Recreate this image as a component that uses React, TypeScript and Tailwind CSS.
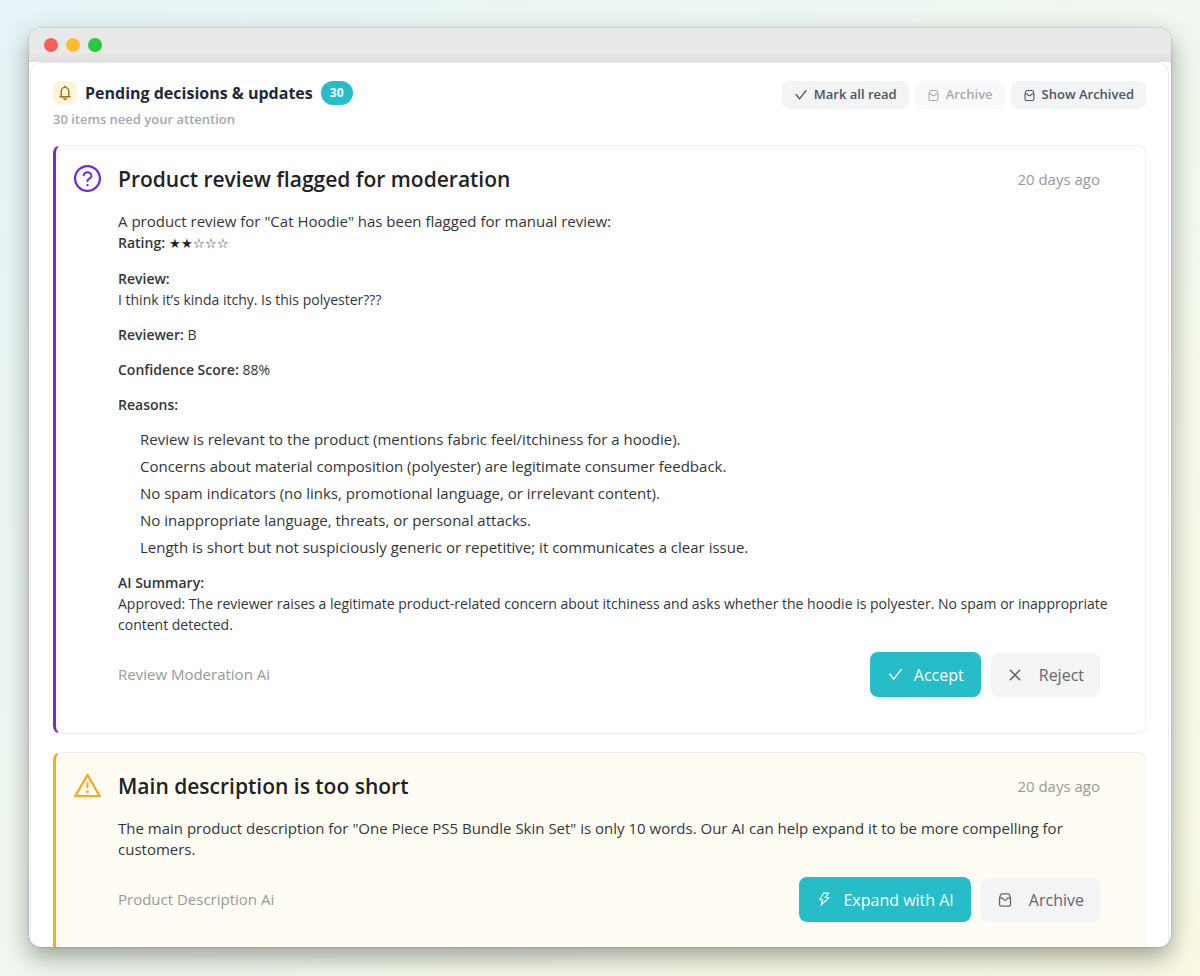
import type { ReactNode } from "react";
import {
  AiOutlineCheck,
  AiOutlineClose,
  AiOutlineQuestionCircle,
  AiOutlineThunderbolt,
  AiOutlineWarning,
} from "react-icons/ai";

function InboxIcon({ className }: { className: string }) {
  return (
    <svg viewBox="0 0 16 16" className={className} fill="none" stroke="currentColor" strokeWidth="1.3" strokeLinejoin="round" strokeLinecap="round" aria-hidden="true">
      <path d="M5.200 1.800h5.600a1.800 1.800 0 0 1 1.800 1.400l.9 3.400v5.600a1.900 1.900 0 0 1-1.900 1.900H4.400a1.900 1.900 0 0 1-1.900-1.900V6.600l.9-3.400a1.800 1.800 0 0 1 1.800-1.400z" />
      <path d="M2.700 6.200h3c.3 1.400 1.100 2.200 2.300 2.200s2-.8 2.300-2.200h3" />
    </svg>
  );
}

function BellIcon() {
  return (
    <svg viewBox="0 0 16 16" className="size-4" fill="none" stroke="currentColor" strokeWidth="1.4" strokeLinejoin="round" strokeLinecap="round" aria-hidden="true">
      <path d="M3 11.800h10M4.200 11.800V6.200a3.800 3.800 0 0 1 7.600 0v5.600M8 1v1.400" />
      <path d="M6.800 13.600a1.300 1.300 0 0 0 2.400 0" />
    </svg>
  );
}

function SmallButton({ icon, children, disabled }: { icon: ReactNode; children: ReactNode; disabled?: boolean }) {
  return (
    <button type="button" disabled={disabled} className="flex h-7 items-center gap-1.5 rounded-lg bg-[#f3f4f6] px-3 text-[13px] font-semibold text-[#4b5563] disabled:opacity-50">
      {icon}
      {children}
    </button>
  );
}

function PrimaryButton({ icon, children }: { icon: ReactNode; children: ReactNode }) {
  return (
    <button type="button" className="flex h-[45px] items-center gap-2.5 rounded-lg bg-[#26bdc9] px-[17px] text-base text-white">
      {icon}
      {children}
    </button>
  );
}

function SecondaryButton({ icon, children }: { icon: ReactNode; children: ReactNode }) {
  return (
    <button type="button" className="flex h-11 items-center gap-4 rounded-lg bg-[#f3f4f6] px-4 text-base text-[#666666]">
      {icon}
      {children}
    </button>
  );
}

interface DecisionCardProps {
  cardClass: string;
  icon: ReactNode;
  title: string;
  time: string;
  source: string;
  actions: ReactNode;
  children: ReactNode;
}

function DecisionCard({ cardClass, icon, title, time, source, actions, children }: DecisionCardProps) {
  return (
    <article className={`flex gap-[15px] rounded-lg border border-l-[3px] border-[#efeff5] pt-[17px] pr-[45px] pb-9 pl-4 ${cardClass}`}>
      <div className="shrink-0">{icon}</div>
      <div className="min-w-0 flex-1">
        <div className="flex items-center justify-between">
          <h2 className="text-[21px] leading-8 font-semibold text-[#1f2225]">{title}</h2>
          <time className="text-[15px] text-[#999999]">{time}</time>
        </div>
        <div className="mt-4 -mr-3 text-[14px] leading-[21px] text-[#333639]">{children}</div>
        <div className="mt-[17px] flex items-center justify-between">
          <span className="text-[15px] text-[#999999]">{source}</span>
          <div className="flex items-center gap-2.5">{actions}</div>
        </div>
      </div>
    </article>
  );
}

const reasons = [
  "Review is relevant to the product (mentions fabric feel/itchiness for a hoodie).",
  "Concerns about material composition (polyester) are legitimate consumer feedback.",
  "No spam indicators (no links, promotional language, or irrelevant content).",
  "No inappropriate language, threats, or personal attacks.",
  "Length is short but not suspiciously generic or repetitive; it communicates a clear issue.",
];

export default function App() {
  return (
    <div className="flex h-screen flex-col bg-linear-to-br from-[#e6f4f7] via-[#eff7ee] to-[#f9f9e2] px-[29px] pt-7 pb-[29px] font-['Open_Sans','Noto_Sans',sans-serif]">
      <div className="flex min-h-0 flex-1 flex-col overflow-hidden rounded-xl bg-white shadow-[0_10px_24px_rgba(0,0,0,0.35),0_0_2px_rgba(0,0,0,0.3)]">
        <div className="flex h-[34px] shrink-0 items-center gap-2 bg-linear-to-b from-[#e8e8e8] from-70% to-[#dfdfdf] px-[15px]">
          <span className="size-3.5 rounded-full bg-[#ff5f57]" />
          <span className="size-3.5 rounded-full bg-[#febc2e]" />
          <span className="size-3.5 rounded-full bg-[#28c840]" />
        </div>
        <main className="mr-0.5 ml-px min-h-0 flex-1 overflow-hidden rounded-t-xl border border-b-0 border-[#e8eaed] px-[22px] pt-[18px]">
          <header className="flex items-start justify-between">
            <div>
              <div className="flex items-center gap-2">
                <span className="grid size-6 place-items-center rounded-md bg-[#fff5de] text-[#9a7412]">
                  <BellIcon />
                </span>
                <h1 className="text-base leading-6 font-bold text-[#1f2937]">Pending decisions &amp; updates</h1>
                <span className="grid h-6 w-8 place-items-center rounded-full bg-[#26bdc9] text-xs font-bold text-white">30</span>
              </div>
              <p className="mt-1 text-[13px] leading-5 font-semibold text-[#a3a9b4]">30 items need your attention</p>
            </div>
            <div className="flex gap-1.5">
              <SmallButton icon={<AiOutlineCheck className="size-3.5 stroke-[30]" />}>Mark all read</SmallButton>
              <SmallButton disabled icon={<InboxIcon className="size-[13px]" />}>Archive</SmallButton>
              <SmallButton icon={<InboxIcon className="size-[13px]" />}>Show Archived</SmallButton>
            </div>
          </header>
          <div className="mt-4 flex flex-col gap-[18px]">
            <DecisionCard
              cardClass="border-l-[#722ed1]"
              icon={<AiOutlineQuestionCircle className="size-[31px] text-[#722ed1]" />}
              title="Product review flagged for moderation"
              time="20 days ago"
              source="Review Moderation Ai"
              actions={
                <>
                  <PrimaryButton icon={<AiOutlineCheck className="size-[17px]" />}>Accept</PrimaryButton>
                  <SecondaryButton icon={<AiOutlineClose className="size-4 stroke-[20]" />}>Reject</SecondaryButton>
                </>
              }
            >
              <p className="text-[15px]">A product review for "Cat Hoodie" has been flagged for manual review:</p>
              <p><strong className="font-semibold">Rating:</strong> <span className="text-[13px] text-[#1f2225]">★★☆☆☆</span></p>
              <p className="mt-3.5"><strong className="font-semibold">Review:</strong></p>
              <p>I think it’s kinda itchy. Is this polyester???</p>
              <p className="mt-3.5"><strong className="font-semibold">Reviewer:</strong> B</p>
              <p className="mt-3.5"><strong className="font-semibold">Confidence Score:</strong> 88%</p>
              <p className="mt-3.5"><strong className="font-semibold">Reasons:</strong></p>
              <ul className="mt-3.5 flex flex-col gap-1.5 pl-[22px] text-[15px]">
                {reasons.map((reason) => (
                  <li key={reason}>{reason}</li>
                ))}
              </ul>
              <p className="mt-3.5"><strong className="font-semibold">AI Summary:</strong></p>
              <p>Approved: The reviewer raises a legitimate product-related concern about itchiness and asks whether the hoodie is polyester. No spam or inappropriate content detected.</p>
            </DecisionCard>
            <DecisionCard
              cardClass="border-l-[#f5ab20] bg-[#fffdf3]"
              icon={<AiOutlineWarning className="size-[31px] text-[#f5ab20]" />}
              title="Main description is too short"
              time="20 days ago"
              source="Product Description Ai"
              actions={
                <>
                  <PrimaryButton icon={<AiOutlineThunderbolt className="size-[17px]" />}>Expand with AI</PrimaryButton>
                  <SecondaryButton icon={<InboxIcon className="size-4" />}>Archive</SecondaryButton>
                </>
              }
            >
              <p className="text-[15px]">The main product description for "One Piece PS5 Bundle Skin Set" is only 10 words. Our AI can help expand it to be more compelling for customers.</p>
            </DecisionCard>
          </div>
        </main>
      </div>
    </div>
  );
}
